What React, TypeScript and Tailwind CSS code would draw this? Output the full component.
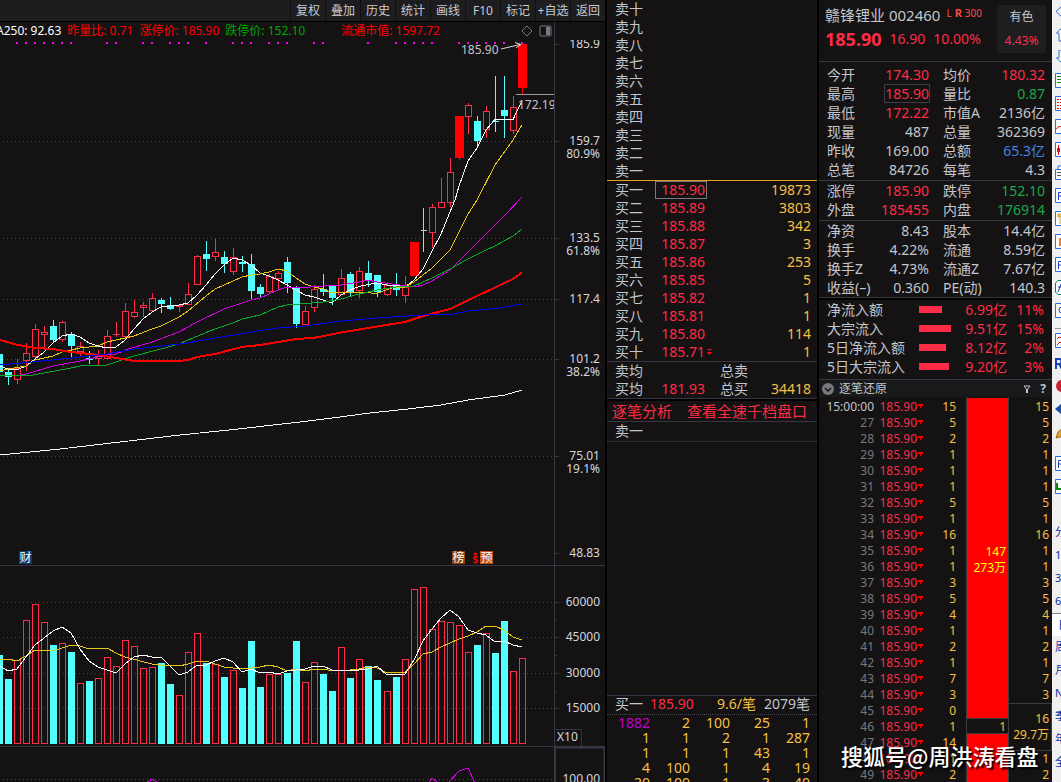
import React from "react";

type Kind = "r" | "c" | "f" | "g";
type Candle = [Kind, number, number, number, number];
type Points = number[][];

const RED = "#ff2c47";
const CYAN = "#54ffff";

const tools = ["复权", "叠加", "历史", "统计", "画线", "F10", "标记", "+自选", "返回"];

/* kind, high, body top, body bottom, low */
const candles: Candle[] = [
  ["c", 354, 354, 372, 372], ["c", 369, 372, 377, 385], ["r", 359, 368, 380, 384], ["r", 343, 353, 361, 371],
  ["r", 324, 329, 357, 360], ["r", 326, 332, 335, 348], ["c", 320, 326, 340, 342], ["r", 321, 322, 340, 342],
  ["c", 332, 334, 346, 357], ["r", 342, 346, 352, 356], ["c", 351, 358, 360, 364], ["r", 350, 356, 359, 365],
  ["r", 330, 336, 359, 359], ["r", 322, 334, 335, 337], ["r", 303, 311, 337, 339], ["r", 300, 312, 317, 318],
  ["r", 302, 305, 308, 317], ["r", 293, 298, 311, 311], ["c", 298, 300, 304, 313], ["c", 297, 305, 309, 310],
  ["r", 304, 305, 307, 312], ["r", 283, 294, 305, 305], ["r", 255, 256, 285, 285], ["c", 241, 254, 259, 271],
  ["r", 239, 252, 257, 261], ["c", 251, 257, 264, 273], ["r", 248, 257, 272, 275], ["c", 256, 262, 264, 272],
  ["c", 254, 264, 291, 300], ["c", 284, 287, 294, 298], ["r", 274, 276, 292, 294], ["r", 271, 273, 279, 289],
  ["c", 257, 262, 283, 293], ["c", 286, 288, 324, 328], ["r", 306, 311, 325, 325], ["r", 285, 289, 308, 312],
  ["c", 274, 289, 292, 296], ["c", 286, 286, 298, 305], ["r", 269, 278, 295, 295], ["c", 272, 274, 292, 296],
  ["r", 267, 271, 291, 298], ["c", 261, 273, 280, 287], ["c", 275, 275, 292, 297], ["r", 282, 285, 295, 296],
  ["c", 273, 284, 290, 296], ["r", 276, 287, 296, 303], ["f", 242, 242, 276, 276], ["g", 208, 230, 231, 252],
  ["r", 204, 207, 233, 248], ["r", 178, 202, 208, 208], ["r", 158, 172, 203, 207], ["f", 116, 116, 158, 160],
  ["r", 103, 105, 117, 134], ["c", 116, 121, 141, 147], ["r", 106, 111, 130, 138], ["c", 76, 121, 122, 132],
  ["c", 76, 110, 116, 138], ["r", 96, 107, 131, 134], ["f", 44, 44, 88, 95],
];

const volumeTops = [
  655, 679, 660, 620, 604, 622, 645, 643, 652, 683, 681, 678, 657, 666, 640, 646, 668, 667, 663, 684, 695, 652, 633,
  663, 664, 677, 670, 688, 641, 687, 674, 674, 673, 641, 682, 662, 674, 691, 647, 678, 659, 666, 680, 691, 677, 659,
  589, 587, 629, 621, 622, 625, 652, 645, 633, 653, 621, 671, 658,
];

const ma5: Points = [[0, 366], [8, 369], [18, 369.5], [26, 366], [35, 359], [44, 352], [53, 343], [62, 336], [71, 334], [80, 337], [89, 343], [98, 346], [107, 348], [116, 347], [125, 340], [134, 329], [143, 319], [152, 312], [161, 307], [170, 306], [179, 305], [188, 303], [197, 295], [206, 285], [215, 274], [224, 265], [233, 258], [242, 260], [251, 265], [260, 273], [269, 276], [278, 280], [287, 285], [296, 290], [305, 295], [314, 297], [323, 300], [332, 303], [341, 295], [350, 290], [359, 286.5], [368, 284.5], [377, 283], [387, 285], [396, 285], [405, 287], [414, 280], [423, 269], [432, 251], [441, 234], [450, 212], [455, 200], [459, 186], [468, 161], [477, 148], [486, 130], [495, 119.5], [513, 119.5], [522, 101]];
const ma10: Points = [[0, 371], [8, 369], [26, 366], [35, 360], [53, 356], [62, 352], [80, 348], [98, 346], [107, 342], [134, 336], [152, 329], [161, 326], [179, 317], [188, 311], [206, 296], [215, 289], [242, 277], [251, 275], [260, 274], [269, 272], [278, 269], [287, 271], [296, 278], [305, 284], [314, 287], [323, 289], [332, 293], [359, 292], [377, 293.5], [387, 289.5], [396, 287], [405, 287], [414, 282], [432, 268], [450, 250], [468, 214], [477, 200], [495, 165], [513, 140], [522, 125]];
const ma20: Points = [[17, 376], [26, 374], [53, 366], [80, 361], [107, 355], [116, 354], [125, 350], [152, 342], [179, 332], [188, 327], [197, 322], [224, 309], [242, 303], [251, 300], [260, 298], [278, 290], [287, 287], [310, 287], [323, 286], [341, 285], [359, 282], [368, 280], [377, 282], [396, 284.5], [414, 287], [423, 285], [432, 281], [450, 270], [459, 261], [477, 243], [505, 215], [522, 197]];
const ma30: Points = [[0, 375.5], [30, 375.5], [44, 373], [71, 368], [80, 366], [107, 365], [116, 362], [134, 356], [161, 349], [179, 344], [188, 340], [215, 329], [233, 323], [242, 319], [260, 315], [278, 307], [287, 305], [300, 304], [323, 302], [341, 299], [359, 294], [377, 290], [396, 287], [414, 286], [423, 282], [432, 278], [450, 269], [464, 261], [486, 250], [495, 246], [513, 236], [522, 229]];
const ma120: Points = [[0, 365], [53, 360], [107, 354], [134, 349], [161, 346], [188, 343], [197, 341], [251, 332], [278, 328], [305, 326], [341, 321], [377, 318], [423, 315], [453, 314], [468, 311], [500, 308], [522, 304]];
const ma60: Points = [[0, 340], [18, 345], [35, 348], [53, 349], [71, 352], [98, 355], [116, 358], [134, 361], [179, 361], [188, 360], [197, 357], [215, 354], [242, 347], [260, 345], [278, 342], [296, 339], [313, 338], [341, 332.5], [368, 328], [405, 322], [423, 316], [450, 309], [477, 296], [513, 279], [522, 272.5]];
const ma250: Points = [[0, 455], [60, 449], [120, 442], [180, 435], [229, 430], [300, 422], [340, 417], [370, 413], [408, 409], [441, 405], [468, 400], [505, 395], [522, 390]];
const volFast: Points = [[0, 666], [8, 671], [17, 669], [26, 657], [35, 645], [44, 638], [53, 631], [62, 627], [71, 633], [80, 649], [89, 661], [98, 667], [107, 670], [116, 673], [125, 664], [134, 657], [143, 655], [152, 657], [161, 657], [170, 666], [179, 675], [188, 672], [197, 665], [206, 665], [215, 661], [224, 658], [233, 662], [242, 672], [251, 669], [260, 673], [269, 672], [278, 674], [287, 671], [305, 669], [314, 666], [323, 666], [332, 670], [359, 670], [368, 669], [377, 666], [387, 675], [405, 674], [414, 660], [423, 641], [432, 629], [441, 618], [450, 610], [459, 617], [468, 630], [477, 633], [486, 635], [495, 642], [504, 641], [513, 645], [522, 647]];
const volSlow: Points = [[0, 660], [8, 659], [17, 661], [26, 656], [35, 650], [53, 651], [62, 648], [71, 645], [80, 646], [89, 649], [107, 648], [116, 653], [125, 657], [152, 664], [161, 665], [179, 666], [188, 664], [197, 661], [206, 661], [224, 667], [242, 669], [260, 667], [269, 665], [278, 667], [287, 671], [296, 669], [305, 671], [314, 669], [341, 671], [359, 669], [368, 667], [377, 668], [387, 673], [405, 672], [414, 664], [423, 654], [432, 652], [441, 647], [459, 639], [468, 636], [477, 632], [486, 626], [495, 626], [504, 630], [513, 637], [522, 640]];

const signalDots = [17, 26, 35, 44, 53, 62, 71, 107, 116, 143, 152, 170, 179, 188, 206, 233, 242, 251, 269, 278, 287, 314, 323, 368, 396, 405, 414, 423, 432, 459, 468, 477, 486, 495, 504, 522];

const centre = (i: number) => 9 * i - 0.5 + (i >= 43 ? 1 : 0);

function Line({ points, color, width = 1 }: { points: Points; color: string; width?: number }) {
  return (
    <polyline
      points={points.map((p) => p.join(",")).join(" ")}
      fill="none"
      stroke={color}
      strokeWidth={width}
      shapeRendering="crispEdges"
    />
  );
}

function Grid({ ys }: { ys: number[] }) {
  return (
    <g stroke="#45464c" strokeWidth={1}>
      {ys.map((y) => (
        <path key={y} d={`M3 ${y + 0.5}H553`} strokeDasharray="1 3" shapeRendering="crispEdges" />
      ))}
    </g>
  );
}

function AxisText({ y, children }: { y: number; children: string }) {
  return (
    <text x={600} y={y} textAnchor="end" fontSize={12} fill="#d4d7dc">
      {children}
    </text>
  );
}

function Tag({ x, bg, children }: { x: number; bg: string; children: string }) {
  return (
    <g>
      <rect x={x} y={551} width={13} height={13} fill={bg} />
      <text x={x + 0.5} y={562} fontSize={12} fill="#fff">
        {children}
      </text>
    </g>
  );
}

function PriceChart() {
  return (
    <svg viewBox="0 40 605 525" className="block h-auto w-full shrink-0">
      <Grid ys={[141, 238, 299, 359, 456]} />
      <path d="M554.5 40V565M555 44.5h4M555 141.5h4M555 238.5h4M555 299.5h4M555 359.5h4M555 456.5h4M555 553.5h4" stroke="#353744" />
      <g fill="#ff00ff" shapeRendering="crispEdges">
        {signalDots.map((x) => (
          <rect key={x} x={x - 1} y={42} width={2} height={2} />
        ))}
      </g>
      <g shapeRendering="crispEdges">
        {candles.map(([kind, high, top, bottom, low], i) => {
          const x = centre(i);
          if (kind === "g")
            return <path key={i} d={`M${x} ${high}V${low}M${x - 3} ${top + 0.5}H${x + 3}`} stroke="#c8cad0" />;
          if (kind === "r")
            return (
              <g key={i} stroke={RED} fill="none">
                <path d={`M${x} ${high}V${top}M${x} ${bottom}V${low}`} />
                {bottom - top > 1 ? (
                  <rect x={x - 3} y={top + 0.5} width={6} height={bottom - top - 1} />
                ) : (
                  <path d={`M${x - 3.5} ${top + 0.5}h7`} />
                )}
              </g>
            );
          const w = kind === "f" ? 9 : 7;
          const color = kind === "f" ? "#ff0000" : CYAN;
          return (
            <g key={i}>
              <path d={`M${x} ${high}V${low}`} stroke={color} />
              <rect x={x - w / 2} y={top} width={w} height={bottom - top} fill={color} />
            </g>
          );
        })}
      </g>
      <Line points={ma250} color="#ffffff" />
      <Line points={ma5} color="#ffffff" />
      <Line points={ma10} color="#e6c619" />
      <Line points={ma20} color="#d400e6" />
      <Line points={ma30} color="#0aa82c" />
      <Line points={ma60} color="#ff0000" width={2} />
      <Line points={ma120} color="#0000ff" />
      <text x={461} y={54} fontSize={12} fill="#c3c6cc">185.90</text>
      <path d="M501 49L520 44.500M515 42.500L521 44.500L516 48" fill="none" stroke="#d4d7dc" />
      <path d="M516 94.500H554" stroke="#9a9ca0" />
      <svg x={510} y={94} width={44} height={20} viewBox="0 0 44 20">
        <text x={8} y={15} fontSize={12} fill="#c3c6cc">172.19</text>
      </svg>
      <Tag x={19} bg="#0d3a66">财</Tag>
      <Tag x={452} bg="#8a4406">榜</Tag>
      <text x={472.5} y={563} fontSize={10} fontWeight="bold" fill="#ff0000">$</text>
      <path d="M473 555h5L475.500 552z" fill="#ff0000" />
      <Tag x={480} bg="#c4500c">预</Tag>
      <AxisText y={48}>185.9</AxisText>
      <AxisText y={145}>159.7</AxisText>
      <AxisText y={158}>80.9%</AxisText>
      <AxisText y={242}>133.5</AxisText>
      <AxisText y={255}>61.8%</AxisText>
      <AxisText y={303}>117.4</AxisText>
      <AxisText y={363}>101.2</AxisText>
      <AxisText y={376}>38.2%</AxisText>
      <AxisText y={460}>75.01</AxisText>
      <AxisText y={473}>19.1%</AxisText>
      <AxisText y={557}>48.83</AxisText>
    </svg>
  );
}

function VolumeChart() {
  return (
    <svg viewBox="0 566 605 180" className="block h-auto w-full shrink-0">
      <Grid ys={[602, 637, 673, 708]} />
      <path d="M554.5 566V746M555 602.5h4M555 620.5h2M555 637.5h4M555 655.5h2M555 673.5h4M555 691.5h2M555 708.5h4M555 729.5H581.5V746" fill="none" stroke="#353744" />
      <g shapeRendering="crispEdges">
        {volumeTops.map((top, i) => {
          const x = centre(i);
          return candles[i][0] === "c" ? (
            <rect key={i} x={x - 3.5} y={top} width={7} height={744 - top} fill={CYAN} />
          ) : (
            <rect key={i} x={x - 3} y={top + 0.5} width={6} height={743 - top} fill="none" stroke={RED} />
          );
        })}
      </g>
      <Line points={volSlow} color="#e6c619" />
      <Line points={volFast} color="#ffffff" />
      <AxisText y={606}>60000</AxisText>
      <AxisText y={641}>45000</AxisText>
      <AxisText y={677}>30000</AxisText>
      <AxisText y={712}>15000</AxisText>
      <text x={557} y={741} fontSize={12} fill="#d4d7dc">X10</text>
    </svg>
  );
}

function IndicatorChart() {
  return (
    <svg viewBox="0 747 605 45" className="block h-auto w-full shrink-0">
      <Grid ys={[779]} />
      <path d="M555 792V747.500H604.500V792" fill="none" stroke="#353744" strokeWidth={2} />
      <Line points={[[146, 783], [152, 779], [158, 783]]} color="#d400e6" />
      <Line points={[[428, 784], [432, 778], [440, 784], [448, 783], [459, 771], [468, 768], [475, 783]]} color="#d400e6" />
      <AxisText y={783}>100.00</AxisText>
    </svg>
  );
}

function ChartColumn() {
  return (
    <main className="flex min-w-0 flex-1 flex-col overflow-hidden bg-[#141213]">
      <nav className="flex h-[22px] shrink-0 justify-end border-b border-black bg-[#1d1d20] text-xs text-[#c8cbd2]">
        {tools.map((t) => (
          <button key={t} className="w-[35px] border-l border-[#101012] text-center leading-[21px] whitespace-nowrap">
            {t}
          </button>
        ))}
      </nav>
      <div className="flex h-[18px] shrink-0 text-xs leading-[18px] whitespace-nowrap">
        <div className="flex min-w-0 flex-1 items-center border-r border-[#353744]">
          <span className="-ml-1 text-white">A250: 92.63</span>
          <span className="ml-[6px] text-[#ff0000]">昨量比: 0.71</span>
          <span className="ml-[6px] text-[#ff0000]">涨停价: 185.90</span>
          <span className="ml-[6px] text-[#00a400]">跌停价: 152.10</span>
          <span className="ml-9 text-[#ff0000]">流通市值: 1597.72</span>
          <span className="flex-1" />
          <button aria-label="标记点" className="mr-[6px]">
            <svg width="12" height="12" className="block">
              <path d="M6 1L11 6L6 11L1 6z" fill="none" stroke="#77797d" />
            </svg>
          </button>
          <button aria-label="侧栏" className="mr-[2px]">
            <svg width="13" height="12" className="block">
              <rect x="1" y="1" width="11" height="10" rx="1" fill="none" stroke="#77797d" />
              <rect x="7" y="2" width="4" height="8" fill="#77797d" />
            </svg>
          </button>
        </div>
        <div className="w-[50px]" />
      </div>
      <PriceChart />
      <div className="h-px shrink-0 bg-[#353744]" />
      <VolumeChart />
      <div className="h-px shrink-0 bg-[#353744]" />
      <IndicatorChart />
    </main>
  );
}

const sells = ["卖十", "卖九", "卖八", "卖七", "卖六", "卖五", "卖四", "卖三", "卖二", "卖一"];
const buys = [
  ["买一", "185.90", "19873"], ["买二", "185.89", "3803"], ["买三", "185.88", "342"], ["买四", "185.87", "3"],
  ["买五", "185.86", "253"], ["买六", "185.85", "5"], ["买七", "185.82", "1"], ["买八", "185.81", "1"],
  ["买九", "185.80", "114"], ["买十", "185.71", "1"],
];
const queue = [
  ["1882", "2", "100", "25", "1"], ["1", "1", "2", "1", "287"], ["1", "1", "1", "43", "1"], ["4", "100", "1", "4", "19"],
  ["20", "100", "1", "3", "40"],
];

function OrderBook() {
  return (
    <section className="flex w-[210px] shrink-0 flex-col overflow-hidden bg-[#141213] text-sm text-[#c3c6cc]">
      <table className="w-full border-b border-[#e0a030] leading-[18px]">
        <tbody>
          {sells.map((s) => (
            <tr key={s} className="h-[18px]">
              <th className="p-0 pl-2 text-left font-normal">{s}</th>
            </tr>
          ))}
        </tbody>
      </table>
      <table className="w-full table-fixed leading-[18px]">
        <tbody>
          {buys.map(([label, price, qty], i) => (
            <tr key={label} className="h-[18px]">
              <th className="w-12 p-0 pl-2 text-left font-normal">{label}</th>
              <td className="w-[52px] p-0 text-right text-[#ff2c47]">
                <span className={i === 0 ? "block pr-[2px] outline -outline-offset-1 outline-[#77797d]" : "block pr-[2px]"}>{price}</span>
              </td>
              <td className="w-3 p-0">
                {i === 9 && (
                  <svg width="6" height="7" className="block" shapeRendering="crispEdges">
                    <path d="M0 0h5v1H3v1h-1V1H0zM0 3h5v1H4v1H3v1H2V5H1V4H0z" fill="#ff0000" />
                  </svg>
                )}
              </td>
              <td className="p-0 pr-[6px] text-right text-[#f5c043]">{qty}</td>
            </tr>
          ))}
        </tbody>
      </table>
      <table className="w-full table-fixed border-y border-[#353744] leading-[18px]">
        <tbody>
          <tr className="h-[18px]">
            <th className="w-12 p-0 pl-2 text-left font-normal">卖均</th>
            <td className="w-[50px] p-0" />
            <th className="w-[50px] p-0 pl-[15px] text-left font-normal">总卖</th>
            <td className="p-0" />
          </tr>
          <tr className="h-[18px]">
            <th className="p-0 pl-2 text-left font-normal">买均</th>
            <td className="p-0 text-right text-[#ff2c47]">181.93</td>
            <th className="p-0 pl-[15px] text-left font-normal">总买</th>
            <td className="p-0 pr-[6px] text-right text-[#f5c043]">34418</td>
          </tr>
        </tbody>
      </table>
      <div className="flex h-[23px] shrink-0 items-center gap-[15px] border-t-2 border-b border-t-black border-b-[#353744] pb-px pl-[5px] text-[15px] leading-5 whitespace-nowrap text-[#ff2c47]">
        <a href="#analysis">逐笔分析</a>
        <a href="#depth">查看全速千档盘口</a>
      </div>
      <div className="h-5 shrink-0 border-b border-dotted border-[#45464c] pl-2 leading-[18px]">卖一</div>
      <div className="flex-1" />
      <div className="h-[87px] shrink-0 overflow-hidden border-t border-[#353744]">
        <div className="flex h-[19px] border-b border-dotted border-[#45464c] pr-[7px] pl-2 leading-4 whitespace-nowrap">
          <span>买一</span>
          <span className="ml-[7px] text-[#ff2c47]">185.90</span>
          <span className="flex-1" />
          <span className="text-[#f5c043]">9.6/笔</span>
          <span className="ml-2">2079笔</span>
        </div>
        <table className="w-[203px] table-fixed text-right leading-[15px] text-[#f5c043]">
          <tbody>
            {queue.map((row, r) => (
              <tr key={r} className="h-[15px]">
                {row.map((v, c) => (
                  <td key={c} className={r === 0 && c === 0 ? "w-[43px] p-0 text-[#c000c8]" : "p-0"}>
                    {v}
                  </td>
                ))}
              </tr>
            ))}
          </tbody>
        </table>
      </div>
    </section>
  );
}

const R = "text-[#ff2c47]";
const G = "text-[#1aa84a]";
const W = "";
const B = "text-[#3f86e0]";
type Stat = [string, string, string, string, string, string];
const stats1: Stat[] = [
  ["今开", "174.30", R, "均价", "180.32", R],
  ["最高", "185.90", R, "量比", "0.87", G],
  ["最低", "172.22", R, "市值A", "2136亿", W],
  ["现量", "487", W, "总量", "362369", W],
  ["昨收", "169.00", W, "总额", "65.3亿", B],
  ["总笔", "84726", W, "每笔", "4.3", W],
];
const stats2: Stat[] = [
  ["涨停", "185.90", R, "跌停", "152.10", G],
  ["外盘", "185455", R, "内盘", "176914", G],
];
const stats3: Stat[] = [
  ["净资", "8.43", W, "股本", "14.4亿", W],
  ["换手", "4.22%", W, "流通", "8.59亿", W],
  ["换手Z", "4.73%", W, "流通Z", "7.67亿", W],
  ["收益(–)", "0.360", W, "PE(动)", "140.3", W],
];

function StatTable({ rows }: { rows: Stat[] }) {
  return (
    <table className="w-full table-fixed leading-[19px] whitespace-nowrap">
      <tbody>
        {rows.map(([a, av, ac, b, bv, bc]) => (
          <tr key={a} className="h-[19px]">
            <th className="w-[58px] p-0 pl-2 text-left font-normal">{a}</th>
            <td className={`w-[53px] p-0 text-right ${ac}`}>
              <span className={a === "最高" ? "inline-block px-px outline -outline-offset-1 outline-[#3c3d42]" : "px-px"}>{av}</span>
            </td>
            <th className="w-[67px] p-0 pl-[13px] text-left font-normal">{b}</th>
            <td className={`p-0 pr-[7px] text-right ${bc}`}>{bv}</td>
          </tr>
        ))}
      </tbody>
    </table>
  );
}

const flows: [string, number, string, string][] = [
  ["净流入额", 23, "6.99亿", "11%"],
  ["大宗流入", 32, "9.51亿", "15%"],
  ["5日净流入额", 27, "8.12亿", "2%"],
  ["5日大宗流入", 30, "9.20亿", "3%"],
];

const tickTimes = ["15:00:00", ...Array.from({ length: 23 }, (_, i) => String(27 + i))];
const tickQty = [15, 5, 2, 1, 1, 1, 5, 1, 16, 1, 1, 3, 5, 4, 1, 2, 1, 7, 3, 0, 1, 14, 1, 2];

function Ticks() {
  return (
    <div className="flex min-h-0 flex-1 overflow-hidden text-xs leading-4">
      <table className="mt-[2px] w-[147px] shrink-0 table-fixed self-start text-right">
        <tbody>
          {tickTimes.map((t, i) => (
            <tr key={t} className="h-4">
              <td className={i === 0 ? "w-[55px] p-0" : "p-0 text-[#77797d]"}>{t}</td>
              <td className="w-[43px] p-0 text-[#ff2c47]">185.90</td>
              <td className="w-[7px] p-0">
                <svg width="7" height="16" className="block" shapeRendering="crispEdges">
                  <path d="M1 5h5v2H4v2H3V7H1z" fill="#ff0000" />
                </svg>
              </td>
              <td className="p-0 pr-[10px] text-[#f5c043]">{tickQty[i]}</td>
            </tr>
          ))}
        </tbody>
      </table>
      <div className="flex w-[43px] shrink-0 flex-col border-r border-l border-[#3c3d42] text-right text-[#ffff00]">
        <div className="mt-px flex h-[320px] shrink-0 flex-col justify-center bg-[#ff0000] pt-[3px] pr-[2px]">
          <span>147</span>
          <span>273万</span>
        </div>
        <div className="h-4 shrink-0 border-y border-[#3c3d42] pr-[2px] leading-4 text-[#f5c043]">1</div>
        <div className="flex-1 bg-[#ff0000]" />
      </div>
      <div className="mt-[2px] min-w-0 flex-1 text-right text-[#f5c043]">
        {tickQty.slice(0, 19).map((q, i) => (
          <div key={i} className="h-4 pr-[3px]">
            {q}
          </div>
        ))}
        <div className="flex h-12 flex-col justify-center border-y border-r border-[#3c3d42] pr-[2px]">
          <span>16</span>
          <span>29.7万</span>
        </div>
        <div className="h-4 pr-[3px]">1</div>
        <div className="h-4 pr-[3px]">2</div>
      </div>
    </div>
  );
}

function QuotePanel() {
  return (
    <section className="relative flex w-[233px] shrink-0 flex-col overflow-hidden bg-[#141213] text-sm text-[#c3c6cc]">
      <header className="flex h-[62px] shrink-0 justify-between border-b border-[#353744] pt-[5px] pr-[6px] pl-[6px] whitespace-nowrap">
        <div>
          <h1 className="flex text-[15px] leading-[20px]">
            <span>赣锋锂业 002460</span>
            <span className="ml-[6px] flex gap-[3px] text-[10px] leading-[16px] text-[#ff4a42]">
              <span>L</span>
              <b className="text-[11px]">R</b>
              <span>300</span>
            </span>
          </h1>
          <p className="flex items-center leading-[28px] text-[#ff2c47]">
            <strong className="text-lg leading-[28px]">185.90</strong>
            <span className="ml-2">16.90</span>
            <span className="ml-2">10.00%</span>
          </p>
        </div>
        <div className="flex h-[48px] w-[49px] flex-col bg-[#1e1e21] text-center text-xs leading-6">
          <span>有色</span>
          <span className="text-[#ff2c47]">4.43%</span>
        </div>
      </header>
      <div className="shrink-0 border-b border-[#353744] pt-[3px] pb-px">
        <StatTable rows={stats1} />
      </div>
      <div className="shrink-0 border-b border-[#353744] pb-px">
        <StatTable rows={stats2} />
      </div>
      <div className="shrink-0 border-b border-[#353744]">
        <StatTable rows={stats3} />
      </div>
      <div className="shrink-0 border-t-2 border-b border-t-black border-b-[#353744] pb-[3px]">
        <table className="w-full table-fixed leading-[19px] whitespace-nowrap">
          <tbody>
            {flows.map(([label, w, amount, pct]) => (
              <tr key={label} className="h-[19px]">
                <th className="w-[100px] p-0 pl-2 text-left font-normal">{label}</th>
                <td className="w-[36px] p-0">
                  <div className="h-[7px] bg-[#ff2c47]" style={{ width: w }} />
                </td>
                <td className="p-0 text-right text-[#ff2c47]">{amount}</td>
                <td className="w-[45px] p-0 pr-2 text-right text-[#ff2c47]">{pct}</td>
              </tr>
            ))}
          </tbody>
        </table>
      </div>
      <div className="flex h-[17px] shrink-0 items-center bg-[#18191b] pr-[6px] pl-[3px] text-xs leading-[17px]">
        <button aria-label="折叠" className="mr-[5px]">
          <svg width="12" height="12" className="block">
            <circle cx="6" cy="6" r="6" fill="#77797d" />
            <path d="M3 5L6 8L9 5" fill="none" stroke="#141213" strokeWidth="1.5" />
          </svg>
        </button>
        <h2 className="flex-1">逐笔还原</h2>
        <button aria-label="筛选" className="mr-[9px]">
          <svg width="8" height="8" className="block">
            <path d="M1 1H7L4 5z" fill="none" stroke="#c3c6cc" />
            <path d="M4 4V8" stroke="#c3c6cc" strokeWidth="2" />
          </svg>
        </button>
        <button className="font-bold">?</button>
      </div>
      <Ticks />
      <div className="absolute bottom-[11px] left-[22px] font-['Noto_Sans_CJK_SC',sans-serif] text-[22px] leading-8 font-medium whitespace-nowrap text-white [text-shadow:2px_2px_2px_#000]">
        搜狐号@周洪涛看盘
      </div>
    </section>
  );
}

const box = <path d="M13 .5H.5V14.500H13" fill="#fff" stroke="#2f6fd8" />;
const sideIcons: [string, React.ReactNode][] = [
  ["后退", <path d="M8 1L1 7.500L8 14" fill="none" stroke="#2f6fd8" />],
  ["上移", <path d="M4 14V6H1.500L8 0M4 14H10" fill="#fff" stroke="#2f6fd8" />],
  ["下移", <path d="M4 0V8H1.500L8 14M4 0H10" fill="#fff" stroke="#2f6fd8" />],
  ["报表", <>{box}<path d="M2 3.500h8M2 6.500h8M2 9.500h8" stroke="#0a8a0a" /></>],
  ["列表", <>{box}<path d="M2 3.500h8M2 6.500h8M2 9.500h8M2 12.500h8" stroke="#e01010" strokeDasharray="2 1" /></>],
  ["分时", <>{box}<path d="M1 10L4 7.500L7 8L9 5" fill="none" stroke="#e01010" /></>],
  ["K线", <>{box}<path d="M3.500 3v10" stroke="#e01010" /><path d="M2 6h3v4H2z" fill="#e01010" /></>],
  ["资讯", <><path d="M3 4V1H9M.5 4.500H9V14.500H.5z" fill="#fff" stroke="#2f6fd8" /><path d="M2 7.500h7M2 10.500h7" stroke="#555" /></>],
  ["F10", <>{box}<path d="M3.500 12V4.500H8M3.500 8h4" fill="none" stroke="#1a3fc0" /></>],
  ["板块", <>{box}<path d="M3 3h4v3H3zM5 7v6" fill="#f5c043" stroke="#e0a030" /></>],
  ["统计", <>{box}<path d="M4 4h4v8H4z" fill="#f08030" /></>],
  ["财务", <>{box}<path d="M3.500 12V4.500H8M3.500 8h4" fill="none" stroke="#1a3fc0" /></>],
  ["公式", <><path d="M13 .5H3L.5 3V12L3 14.500H13" fill="#fff" stroke="#0a7a6a" /><path d="M3 12L6 4H9M3 7h5" fill="none" stroke="#1a3fc0" /></>],
  ["查询", <>{box}<circle cx="7" cy="7" r="3" fill="none" stroke="#1a3fc0" /></>],
  ["画线", <>{box}<path d="M2 6L4 4L7 5M2 12L5 9L8 11" fill="none" stroke="#e01010" /></>],
  ["研究", <path d="M1 13V3H4.500Q6.500 3 6.500 5.500T4.500 8H1M4 8L7 13" fill="none" stroke="#1a3fc0" strokeWidth="2" />],
  ["预警", <circle cx="7" cy="7" r="6" fill="#d02030" />],
  ["移动", <path d="M0 7L6 2V12z" fill="#1a4fa8" />],
  ["编辑", <path d="M1 13L3 7L9 2V11z" fill="#e0a030" stroke="#a86a10" />],
  ["公告", <>{box}<path d="M3.500 12V4.500H8M3.500 8h4" fill="none" stroke="#1a3fc0" /></>],
  ["互动", <>{box}<path d="M2 4v6h6" fill="none" stroke="#0a8a0a" strokeWidth="2" /></>],
];
const periods = ["", "分", "1", "3", "6", "日", "周", "月", "N", "季", "年", "全"];

function SideBar() {
  return (
    <aside className="flex w-[9px] shrink-0 flex-col overflow-hidden bg-[#f0f0f0] pl-[3px] text-[11px] text-[#0a2fa0]">
      {sideIcons.map(([label, icon], i) => (
        <button
          key={label}
          aria-label={label}
          className={
            i === 14
              ? "mt-[6px] flex h-6 shrink-0 items-center border-t border-[#999]"
              : i === 19
                ? "mt-2 flex h-[23px] shrink-0 items-center"
                : "flex h-[23px] shrink-0 items-center"
          }
        >
          <svg width="6" height="15" className="block shrink-0">
            {icon}
          </svg>
        </button>
      ))}
      {periods.map((p, i) => (
        <button
          key={i}
          className={
            i === 5
              ? "-ml-[3px] h-[23px] shrink-0 overflow-hidden border-t border-[#888] bg-white pl-[6px] text-left"
              : "h-[23px] shrink-0 overflow-hidden text-left"
          }
        >
          {p}
        </button>
      ))}
    </aside>
  );
}

export default function App() {
  return (
    <div className="flex h-screen overflow-hidden bg-black font-['Noto_Sans','Noto_Sans_CJK_SC',sans-serif]">
      <ChartColumn />
      <div className="w-[2px] shrink-0" />
      <OrderBook />
      <div className="w-[2px] shrink-0" />
      <QuotePanel />
      <SideBar />
    </div>
  );
}
